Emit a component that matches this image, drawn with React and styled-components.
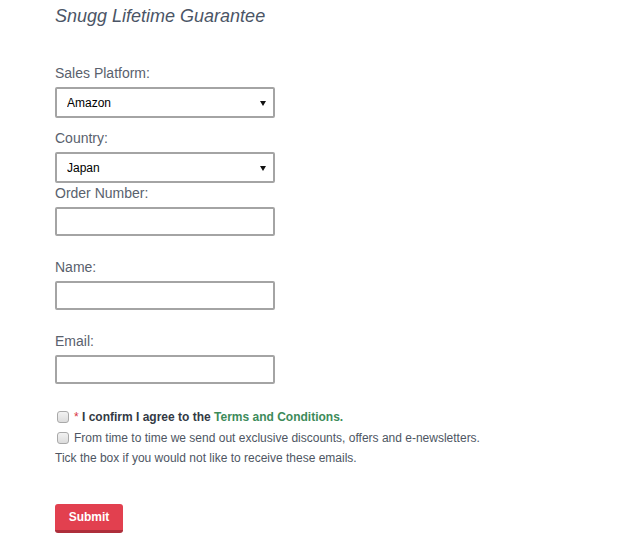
import React from 'react';
import styled, {createGlobalStyle} from 'styled-components';

const GlobalStyle=createGlobalStyle`
body{
margin:0;
background:#fff;
font-family:"Liberation Sans", Arial, sans-serif;
}
`

const Page=styled.form`
display:flex;
flex-direction:column;
align-items:flex-start;
padding:5px 0 0 55px;
`

const Title=styled.h2`
margin:0 0 38px 0;
font-size:18px;
line-height:22px;
font-weight:normal;
font-style:italic;
color:#4b5566;
`

const Field=styled.div`
display:flex;
flex-direction:column;
margin-top:${p=>p.$gap||0}px;
`

const Label=styled.label`
display:block;
font-size:14px;
line-height:17px;
color:#59616d;
margin-bottom:5px;
`

const SelectWrap=styled.div`
position:relative;
width:220px;

&::after{
content:'';
position:absolute;
right:9px;
top:14px;
width:0;
height:0;
border-left:3px solid transparent;
border-right:3px solid transparent;
border-top:5px solid #111;
pointer-events:none;
}
`

const Select=styled.select`
appearance:none;
width:220px;
height:31px;
box-sizing:border-box;
border:2px solid #a4a4a4;
border-radius:2px;
background:#fff;
padding:0 0 0 10px;
font-family:"Liberation Sans", Arial, sans-serif;
font-size:12px;
color:#000;
outline:none;
`

const Input=styled.input`
width:220px;
height:29px;
box-sizing:border-box;
border:2px solid #a4a4a4;
border-radius:2px;
background:#fff;
padding:0 8px;
font-family:"Liberation Sans", Arial, sans-serif;
font-size:12px;
outline:none;
`

const Checks=styled.div`
display:flex;
flex-direction:column;
margin-top:22px;
`

const CheckRow=styled.label`
display:flex;
align-items:center;
gap:5px;
height:21px;
font-size:12px;
color:#4e5663;
font-weight:${p=>p.$bold?'bold':'normal'};
${p=>p.$bold&&'color:#333a44;'}
`

const Box=styled.input.attrs({type:'checkbox'})`
appearance:none;
margin:0 0 0 2px;
width:12px;
height:12px;
border:1px solid #a9a9a9;
border-radius:3px;
background:linear-gradient(#f2f2f2,#dcdcdc);
`

const Star=styled.span`
color:#d8343f;
font-weight:normal;
`

const TermsLink=styled.a`
color:#3d8b5a;
text-decoration:none;
`

const Note=styled.p`
margin:0;
font-size:12px;
line-height:21px;
color:#4e5663;
`

const SubmitButton=styled.button`
margin-top:35px;
width:68px;
height:29px;
box-sizing:border-box;
border:none;
border-bottom:3px solid #ae2f3b;
border-radius:3px;
background:#e2404f;
color:#fff;
font-family:"Liberation Sans", Arial, sans-serif;
font-size:12px;
font-weight:bold;
padding:0;
cursor:pointer;
`

export default function App(){
    return(
    <>
    <GlobalStyle/>
    <Page onSubmit={e=>e.preventDefault()}>
        <Title>Snugg Lifetime Guarantee</Title>
        <Field>
            <Label>Sales Platform:</Label>
            <SelectWrap>
                <Select defaultValue="Amazon">
                    <option>Amazon</option>
                </Select>
            </SelectWrap>
        </Field>
        <Field $gap={12}>
            <Label>Country:</Label>
            <SelectWrap>
                <Select defaultValue="Japan">
                    <option>Japan</option>
                </Select>
            </SelectWrap>
        </Field>
        <Field $gap={2}>
            <Label>Order Number:</Label>
            <Input type="text"/>
        </Field>
        <Field $gap={23}>
            <Label>Name:</Label>
            <Input type="text"/>
        </Field>
        <Field $gap={23}>
            <Label>Email:</Label>
            <Input type="email"/>
        </Field>
        <Checks>
            <CheckRow $bold>
                <Box/>
                <span><Star>*</Star> I confirm I agree to the <TermsLink href="#">Terms and Conditions.</TermsLink></span>
            </CheckRow>
            <CheckRow>
                <Box/>
                <span>From time to time we send out exclusive discounts, offers and e-newsletters.</span>
            </CheckRow>
            <Note>Tick the box if you would not like to receive these emails.</Note>
        </Checks>
        <SubmitButton type="submit">Submit</SubmitButton>
    </Page>
    </>
    )
}
